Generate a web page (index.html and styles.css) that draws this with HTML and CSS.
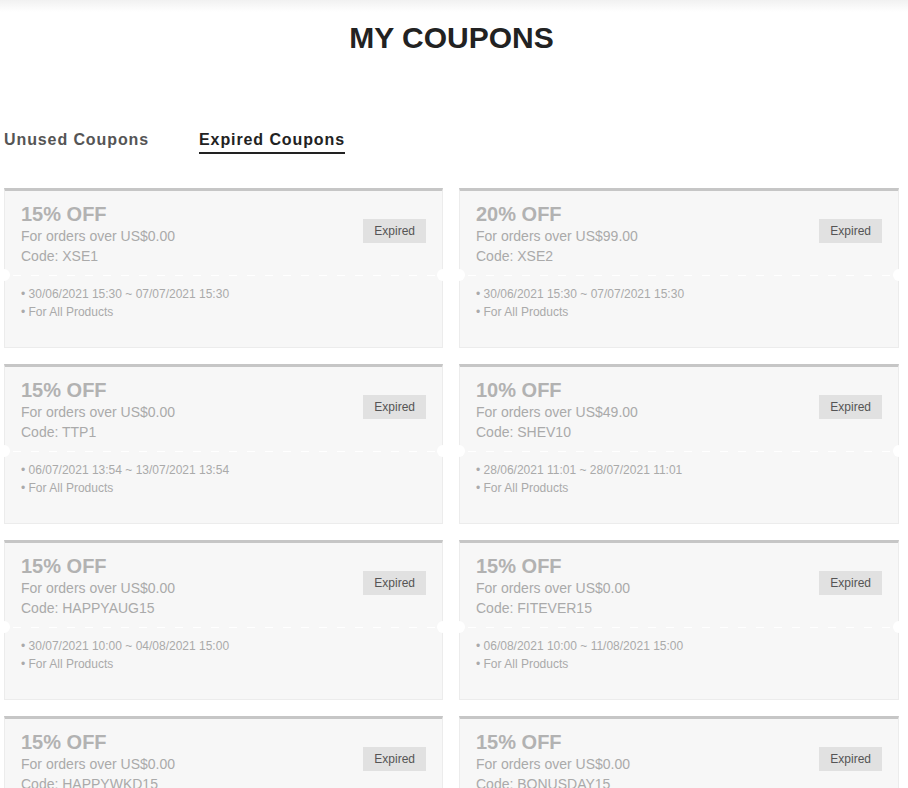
FILE: index.html
```html
<!DOCTYPE html>
<html>
<head>
<meta charset="utf-8">
<link rel="stylesheet" href="styles.css">
</head>
<body>
<div class="topshade"></div>
<div class="page">
  <h1 class="title">MY COUPONS</h1>
  <div class="tabs">
    <div class="tab">Unused Coupons</div>
    <div class="tab active">Expired Coupons</div>
  </div>
  <div class="grid">
    <div class="card">
      <div class="card-top">
        <div class="info">
          <div class="off">15% OFF</div>
          <div class="line">For orders over US$0.00</div>
          <div class="line">Code: XSE1</div>
        </div>
        <div class="badge">Expired</div>
      </div>
      <div class="sep"><span class="notch left"></span><span class="notch right"></span></div>
      <div class="card-bottom">
        <div class="small">• 30/06/2021 15:30 ~ 07/07/2021 15:30</div>
        <div class="small">• For All Products</div>
      </div>
    </div>
    <div class="card">
      <div class="card-top">
        <div class="info">
          <div class="off">20% OFF</div>
          <div class="line">For orders over US$99.00</div>
          <div class="line">Code: XSE2</div>
        </div>
        <div class="badge">Expired</div>
      </div>
      <div class="sep"><span class="notch left"></span><span class="notch right"></span></div>
      <div class="card-bottom">
        <div class="small">• 30/06/2021 15:30 ~ 07/07/2021 15:30</div>
        <div class="small">• For All Products</div>
      </div>
    </div>
    <div class="card">
      <div class="card-top">
        <div class="info">
          <div class="off">15% OFF</div>
          <div class="line">For orders over US$0.00</div>
          <div class="line">Code: TTP1</div>
        </div>
        <div class="badge">Expired</div>
      </div>
      <div class="sep"><span class="notch left"></span><span class="notch right"></span></div>
      <div class="card-bottom">
        <div class="small">• 06/07/2021 13:54 ~ 13/07/2021 13:54</div>
        <div class="small">• For All Products</div>
      </div>
    </div>
    <div class="card">
      <div class="card-top">
        <div class="info">
          <div class="off">10% OFF</div>
          <div class="line">For orders over US$49.00</div>
          <div class="line">Code: SHEV10</div>
        </div>
        <div class="badge">Expired</div>
      </div>
      <div class="sep"><span class="notch left"></span><span class="notch right"></span></div>
      <div class="card-bottom">
        <div class="small">• 28/06/2021 11:01 ~ 28/07/2021 11:01</div>
        <div class="small">• For All Products</div>
      </div>
    </div>
    <div class="card">
      <div class="card-top">
        <div class="info">
          <div class="off">15% OFF</div>
          <div class="line">For orders over US$0.00</div>
          <div class="line">Code: HAPPYAUG15</div>
        </div>
        <div class="badge">Expired</div>
      </div>
      <div class="sep"><span class="notch left"></span><span class="notch right"></span></div>
      <div class="card-bottom">
        <div class="small">• 30/07/2021 10:00 ~ 04/08/2021 15:00</div>
        <div class="small">• For All Products</div>
      </div>
    </div>
    <div class="card">
      <div class="card-top">
        <div class="info">
          <div class="off">15% OFF</div>
          <div class="line">For orders over US$0.00</div>
          <div class="line">Code: FITEVER15</div>
        </div>
        <div class="badge">Expired</div>
      </div>
      <div class="sep"><span class="notch left"></span><span class="notch right"></span></div>
      <div class="card-bottom">
        <div class="small">• 06/08/2021 10:00 ~ 11/08/2021 15:00</div>
        <div class="small">• For All Products</div>
      </div>
    </div>
    <div class="card">
      <div class="card-top">
        <div class="info">
          <div class="off">15% OFF</div>
          <div class="line">For orders over US$0.00</div>
          <div class="line">Code: HAPPYWKD15</div>
        </div>
        <div class="badge">Expired</div>
      </div>
      <div class="sep"><span class="notch left"></span><span class="notch right"></span></div>
      <div class="card-bottom">
        <div class="small">• 13/08/2021 10:00 ~ 16/08/2021 10:00</div>
        <div class="small">• For All Products</div>
      </div>
    </div>
    <div class="card">
      <div class="card-top">
        <div class="info">
          <div class="off">15% OFF</div>
          <div class="line">For orders over US$0.00</div>
          <div class="line">Code: BONUSDAY15</div>
        </div>
        <div class="badge">Expired</div>
      </div>
      <div class="sep"><span class="notch left"></span><span class="notch right"></span></div>
      <div class="card-bottom">
        <div class="small">• 20/08/2021 10:00 ~ 23/08/2021 10:00</div>
        <div class="small">• For All Products</div>
      </div>
    </div>
  </div>
</div>
</body>
</html>
```

FILE: styles.css
```css
* { box-sizing: border-box; }
html, body { margin: 0; padding: 0; background: #fff; }
body { font-family: "Liberation Sans", Arial, sans-serif; }

.topshade {
  height: 12px;
  background: linear-gradient(to bottom, #f1f1f1, #ffffff);
}

.page {
  width: 895px;
  margin-left: 4px;
  padding-bottom: 40px;
}

.title {
  margin: 8px 0 0 0;
  font-size: 30px;
  line-height: 36px;
  font-weight: bold;
  text-align: center;
  color: #222;
}

.tabs {
  display: flex;
  gap: 50px;
  margin-top: 74px;
}

.tab {
  font-size: 16px;
  line-height: 20px;
  font-weight: bold;
  letter-spacing: 0.9px;
  color: #555;
  padding-bottom: 2px;
  border-bottom: 2px solid transparent;
}

.tab.active {
  color: #222;
  border-bottom-color: #222;
}

.grid {
  margin-top: 34px;
  display: grid;
  grid-template-columns: 439px 440px;
  column-gap: 16px;
  row-gap: 16px;
}

.card {
  position: relative;
  height: 160px;
  background: #f7f7f7;
  border: 1px solid #ececec;
  border-top: 3px solid #c6c6c6;
}

.card-top {
  display: flex;
  justify-content: space-between;
  align-items: center;
  padding: 11px 16px 9px 16px;
}

.off {
  font-size: 20px;
  line-height: 24px;
  font-weight: bold;
  color: #b2b2b2;
}

.line {
  font-size: 14px;
  line-height: 20px;
  color: #aaa;
}

.badge {
  background: #e1e1e1;
  color: #555;
  font-size: 12px;
  line-height: 24px;
  height: 24px;
  padding: 0 11px;
  margin-bottom: 6px;
}

.sep {
  position: relative;
  height: 1px;
  background: repeating-linear-gradient(to right, transparent 0 8px, #ffffff 8px 16px, transparent 16px 18px);
}

.notch {
  position: absolute;
  top: -6px;
  width: 12px;
  height: 12px;
  border-radius: 50%;
  background: #fff;
}
.notch.left { left: -7px; }
.notch.right { right: -7px; }

.card-bottom {
  padding: 9px 16px 0 16px;
}

.small {
  font-size: 12px;
  line-height: 18px;
  color: #aaa;
}
```
